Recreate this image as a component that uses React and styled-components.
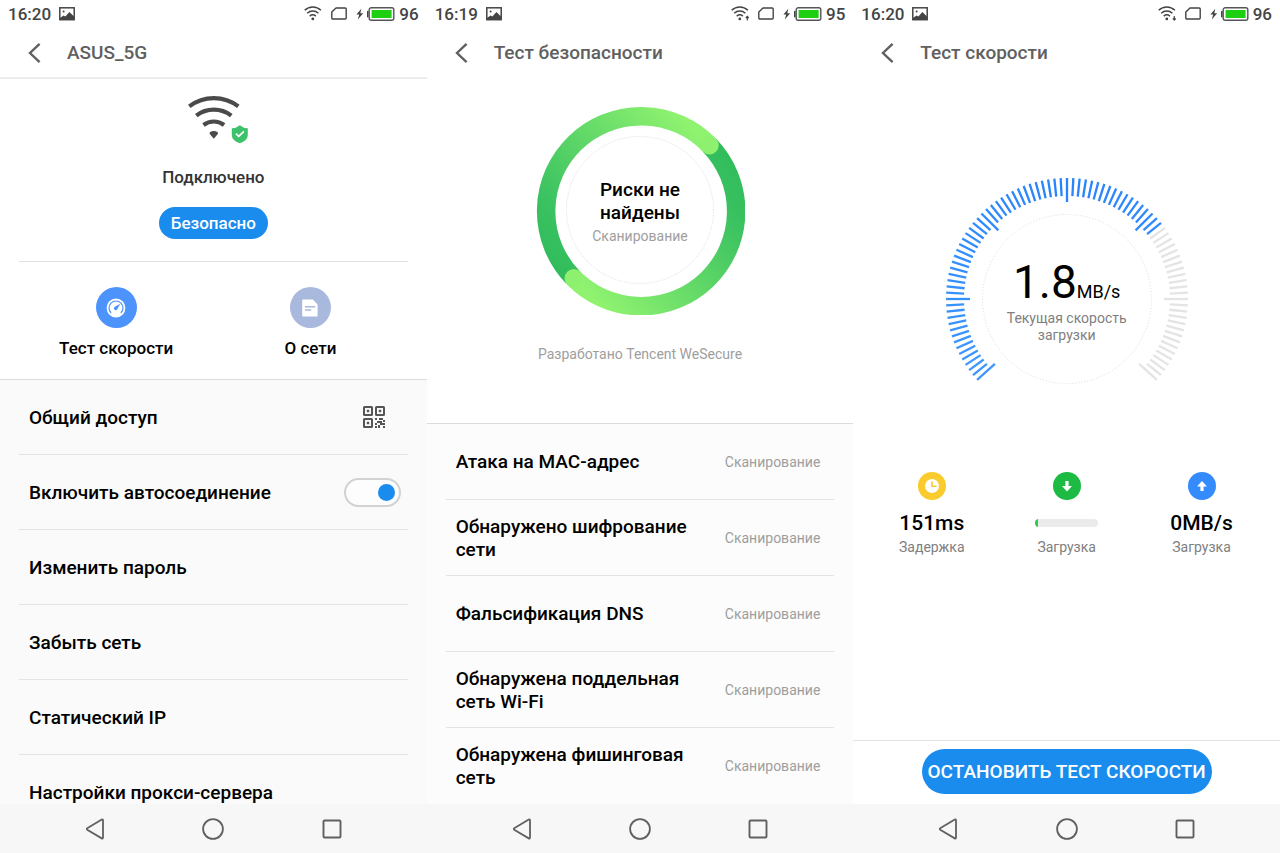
import React, { useState } from 'react';
import styled, { createGlobalStyle } from 'styled-components';

const GlobalStyle = createGlobalStyle`
    * { box-sizing: border-box; }
    body {
        margin: 0;
        background: #fff;
        color: #000;
        font-family: Roboto, "Noto Sans", sans-serif;
    }
    button {
        font-family: inherit;
        border: none;
        background: none;
        padding: 0;
        cursor: pointer;
    }
    ul { list-style: none; margin: 0; padding: 0; }
    h1, p { margin: 0; }
    svg { display: block; }
`;

const Screens = styled.div`
    display: grid;
    grid-template-columns: repeat(3, minmax(0, 1fr));
    height: 100vh;
`;
const Phone = styled.section`
    display: flex;
    flex-direction: column;
    min-height: 0;
    background: #fff;
`;

/* status bar */
const StatusBar = styled.div`
    display: flex;
    flex: none;
    justify-content: space-between;
    align-items: center;
    height: 28px;
    padding: 0 8px;
    color: #444;
    font-size: 17px;
    font-weight: 500;
    line-height: 26px;
`;
const StatusGroup = styled.div`
    display: flex;
    align-items: center;
    gap: ${props => props.$gap}px;
    height: 27px;
    align-self: flex-start;
`;
const Power = styled.span`
    display: flex;
    align-items: center;
    gap: 4px;
`;

/* title bar */
const TitleBar = styled.header`
    display: flex;
    flex: none;
    align-items: center;
    gap: 24px;
    height: 51px;
    padding: 0 26px;
    border-bottom: 2px solid ${props => props.$line ? '#ededed' : 'transparent'};
`;
const Title = styled.h1`
    color: #606060;
    font-size: 19px;
    font-weight: 500;
    line-height: 24px;
`;

/* nav bar */
const NavBar = styled.nav`
    display: grid;
    flex: none;
    grid-template-columns: repeat(3, 1fr);
    height: 49px;
    padding: 0 36px;
    background: #f7f7f7;
`;
const NavButton = styled.button`
    display: flex;
    align-items: center;
    justify-content: center;
`;

/* network screen */
const Hero = styled.div`
    display: flex;
    flex: none;
    flex-direction: column;
    align-items: center;
    margin: 0 19px;
    padding: 16px 0 22px;
    border-bottom: 1px solid #e0e0e0;
`;
const HeroState = styled.p`
    margin-top: 20px;
    color: #333;
    font-size: 17px;
    font-weight: 500;
    line-height: 24px;
`;
const SafeButton = styled.button`
    height: 32px;
    margin-top: 18px;
    padding: 0 12px;
    border-radius: 16px;
    background: #1a8cee;
    color: #fff;
    font-size: 17px;
    font-weight: 500;
`;
const Actions = styled.div`
    display: grid;
    flex: none;
    grid-template-columns: 1fr 1fr;
    padding: 25px 19px 21px;
`;
const Action = styled.button`
    display: flex;
    flex-direction: column;
    align-items: center;
    gap: 10px;
    color: #000;
    font-size: 17px;
    font-weight: 500;
    line-height: 20px;
`;
const ActionIcon = styled.span`
    display: flex;
    align-items: center;
    justify-content: center;
    width: 41px;
    height: 41px;
    border-radius: 50%;
    background: ${props => props.$color};
`;

/* lists */
const List = styled.ul`
    flex: 1;
    min-height: 0;
    overflow: hidden;
    padding: 0 19px;
    border-top: 1px solid #dcdcdc;
    background: ${props => props.$color};
`;
const Row = styled.li`
    display: flex;
    align-items: center;
    justify-content: space-between;
    height: ${props => props.$height}px;
    padding: 0 ${props => props.$right}px 0 10px;
    border-bottom: 1px solid #e4e4e4;
    &:last-child { border-bottom: none; }
`;
const RowButton = styled.button`
    color: #000;
    font-size: 19px;
    font-weight: 500;
    line-height: 23px;
    text-align: left;
`;
const RowLabel = styled.label`
    font-size: 19px;
    font-weight: 500;
    line-height: 23px;
`;
const RowText = styled.span`
    max-width: 240px;
    font-size: 19px;
    font-weight: 500;
    line-height: 23px;
`;
const RowState = styled.span`
    color: #9e9e9e;
    font-size: 14px;
    line-height: 20px;
`;
const Switch = styled.input`
    appearance: none;
    display: flex;
    align-items: center;
    justify-content: flex-start;
    width: 57px;
    height: 29px;
    margin: 0;
    padding: 0 4px;
    border: 2px solid #d2d2d2;
    border-radius: 15px;
    background: #fdfdfd;
    cursor: pointer;
    &::before {
        content: '';
        width: 17px;
        height: 17px;
        border-radius: 50%;
        background: #bbb;
    }
    &:checked { justify-content: flex-end; }
    &:checked::before { background: #1a8cee; }
`;

/* dials: the drawing and its text share one grid cell */
const Dial = styled.div`
    display: grid;
    flex: none;
    justify-items: center;
    align-items: center;
    padding-top: ${props => props.$top}px;
    > * { grid-area: 1 / 1; }
`;
const DialText = styled.div`
    display: flex;
    flex-direction: column;
    align-items: center;
    padding-top: 4px;
    text-align: center;
`;
const RiskText = styled.p`
    width: 100px;
    font-size: 19px;
    font-weight: 500;
    line-height: 23px;
`;
const RiskState = styled.p`
    margin-top: 2px;
    color: #9e9e9e;
    font-size: 14px;
    line-height: 20px;
`;
const Credit = styled.p`
    flex: none;
    padding: 29px 0 59px;
    color: #9e9e9e;
    font-size: 14px;
    line-height: 20px;
    text-align: center;
`;
const Speed = styled.p`
    font-size: 46px;
    line-height: 48px;
    small {
        font-size: 18px;
        line-height: 18px;
    }
`;
const SpeedNote = styled.p`
    width: 140px;
    margin-top: 4px;
    color: #808080;
    font-size: 14px;
    line-height: 17px;
`;

/* speed figures */
const Stats = styled.div`
    display: grid;
    grid-template-columns: repeat(3, 1fr);
    padding: 51px 11px 0;
`;
const Stat = styled.div`
    display: flex;
    flex-direction: column;
    align-items: center;
`;
const StatValue = styled.div`
    display: flex;
    align-items: center;
    height: 24px;
    margin: 11px 0 2px;
    font-size: 21px;
    font-weight: 500;
    line-height: 24px;
`;
const StatName = styled.span`
    color: #808080;
    font-size: 14px;
    line-height: 20px;
`;
const Track = styled.div`
    width: 63px;
    height: 8px;
    border-radius: 4px;
    background: #ebebeb;
    overflow: hidden;
`;
const Fill = styled.div`
    height: 100%;
    background: #2ecc4f;
`;
const Footer = styled.footer`
    display: flex;
    justify-content: center;
    margin-top: auto;
    padding: 8px 0 10px;
    border-top: 1px solid #e2e2e2;
`;
const StopButton = styled.button`
    height: 45px;
    padding: 0 6px;
    border-radius: 23px;
    background: #1a8cee;
    color: #fff;
    font-size: 19px;
    font-weight: 500;
`;

const SIGNAL_ARROWS = {
    up: 'M16.3 14.5V10.6M14.8 12l1.5-1.6 1.5 1.6',
    down: 'M16.3 10v4M14.8 12.4l1.5 1.6 1.5-1.6',
};

const PictureIcon = () => (
    <svg width="16" height="14" viewBox="0 0 16 14">
        <rect x="0.8" y="0.8" width="14.4" height="11.9" fill="none" stroke="#444" strokeWidth="1.5" />
        <path d="M1 12.6V11l3.6-2.6 1.8 1.2L10.4 5l4.6 4.6v3z" fill="#444" />
        <circle cx="4.6" cy="4.4" r="1" fill="#444" />
    </svg>
);

const SignalIcon = ({ arrow }) => (
    <svg width="18" height="15" viewBox="0 0 18 15" fill="none" stroke="#444" strokeWidth="1.5">
        <path d="M0.7 4.2a11.6 11.6 0 0 1 16.2 0" />
        <path d="M3.2 7.3a8.2 8.2 0 0 1 11.2 0" />
        <path d="M5.7 10.1a4.9 4.9 0 0 1 6.2 0" />
        <circle cx="8.8" cy="12.9" r="1.4" fill="#444" stroke="none" />
        {arrow && <path d={SIGNAL_ARROWS[arrow]} strokeWidth="1.2" />}
    </svg>
);

const SimIcon = () => (
    <svg width="16" height="13" viewBox="0 0 16 13">
        <path d="M5 1h9.2a1 1 0 0 1 1 1v9a1 1 0 0 1-1 1H1.8a1 1 0 0 1-1-1V5z" fill="none" stroke="#444" strokeWidth="1.4" strokeLinejoin="round" />
    </svg>
);

const BatteryIcon = () => (
    <svg width="39" height="14" viewBox="0 0 39 14">
        <path d="M5.3 1.8L0.4 7.6h2.8l-1.4 4.9L7.2 6.3H4.3z" fill="#444" />
        <path d="M11.8 4.6v5.2" stroke="#444" strokeWidth="1.6" strokeLinecap="round" />
        <rect x="13.2" y="0.8" width="24.6" height="12.4" rx="2" fill="none" stroke="#555" strokeWidth="1.4" />
        <rect x="15.6" y="3" width="20" height="8" fill="#1fcf12" />
    </svg>
);

const BackIcon = () => (
    <svg width="17" height="22" viewBox="0 0 17 22">
        <path d="M13.6 1.8L4 11l9.6 9.2" fill="none" stroke="#606060" strokeWidth="2.4" />
    </svg>
);

const WifiSafeIcon = () => (
    <svg width="76" height="50" viewBox="0 0 76 50">
        <g fill="none" stroke="#4a4a4a" strokeWidth="4.2">
            <path d="M14.3 11.3a40.5 40.5 0 0 1 49 0" />
            <path d="M21.3 20.6a28.6 28.6 0 0 1 35 0" />
            <path d="M28.5 30a17 17 0 0 1 20.6 0" />
        </g>
        <path d="M34.9 37.2q3.9-2.4 7.8 0q.8 1-.1 2.1l-3.8 4.4-3.8-4.4q-.9-1.1-.1-2.1z" fill="#4a4a4a" />
        <path d="M64.8 30.3q3.6 3 8 3V40q0 5.4-8 8.3-8-2.9-8-8.3v-6.7q4.4 0 8-3z" fill="#3cc26a" />
        <path d="M60.9 38.6l2.8 2.8 5.2-5" fill="none" stroke="#fff" strokeWidth="1.6" />
    </svg>
);

const GaugeIcon = () => (
    <svg width="20" height="20" viewBox="0 0 20 20">
        <circle cx="10" cy="10" r="9.4" fill="#fff" />
        <path d="M5.1 15a7 7 0 1 1 9.8 0" fill="none" stroke="#4c93fb" strokeWidth="1.2" />
        <path d="M14.4 5.8l-3 5.3a1.8 1.8 0 1 1-2.5-2.3z" fill="#4c93fb" />
    </svg>
);

const DocIcon = () => (
    <svg width="18" height="18" viewBox="0 0 18 18">
        <path d="M1.2 1.6a1 1 0 0 1 1-1h9.6l4.8 4.8v11a1 1 0 0 1-1 1H2.2a1 1 0 0 1-1-1z" fill="#fff" />
        <path d="M4 7.7h10.2M4 11h6.2" stroke="#a9b8dd" strokeWidth="1.6" />
    </svg>
);

const QrIcon = () => (
    <svg width="22" height="22" viewBox="0 0 22 22" fill="#555">
        {[[0, 0], [12, 0], [0, 12]].map(([x, y]) => (
            <g key={`${x}-${y}`}>
                <rect x={x + 1} y={y + 1} width="8" height="8" rx="0.5" fill="none" stroke="#555" strokeWidth="2" />
                <rect x={x + 3.8} y={y + 3.8} width="2.4" height="2.4" />
            </g>
        ))}
        <path d="M12 12h2v2h-2zM16 12h4v2h-4zM20 14h2v2h-2zM14 15h5v2h-5zM12 17h2v2h-2zM17 17h5v2h-5zM12 20h2v2h-2zM15 19h2v3h-2zM20 20h2v2h-2z" />
    </svg>
);

const ClockIcon = () => (
    <svg width="28" height="28" viewBox="0 0 28 28">
        <circle cx="14" cy="14" r="14" fill="#f9cb2c" />
        <circle cx="14" cy="14" r="7" fill="#fff" />
        <path d="M14 9.5v4.8h4.5" fill="none" stroke="#f9cb2c" strokeWidth="1.6" />
    </svg>
);

const ArrowIcon = ({ color, up }) => (
    <svg width="28" height="28" viewBox="0 0 28 28">
        <circle cx="14" cy="14" r="14" fill={color} />
        <path
            d={up ? 'M14 9l5 5.5h-3.4v4.5h-3.2v-4.5H9z' : 'M14 19.5l5-5.5h-3.4V9h-3.2v5H9z'}
            fill="#fff"
        />
    </svg>
);

const ScanRing = () => (
    <svg width="210" height="210" viewBox="-105 -105 210 210">
        <defs>
            <linearGradient id="ringUp" gradientUnits="userSpaceOnUse" x1="-78" y1="66" x2="68" y2="-66">
                <stop offset="0" stopColor="#31bc5b" />
                <stop offset="0.2" stopColor="#3bc261" />
                <stop offset="1" stopColor="#90f370" />
            </linearGradient>
            <linearGradient id="ringDown" gradientUnits="userSpaceOnUse" x1="78" y1="-66" x2="-68" y2="66">
                <stop offset="0" stopColor="#31bc5b" />
                <stop offset="0.2" stopColor="#3bc261" />
                <stop offset="1" stopColor="#90f370" />
            </linearGradient>
        </defs>
        <g fill="none" strokeWidth="18.5">
            <path d="M-67.2 67.2A95 95 0 0 1 69.5 -64.8" stroke="url(#ringUp)" />
            <path d="M69.5 -64.8A95 95 0 0 1 -67.2 67.2" stroke="url(#ringDown)" />
        </g>
        <circle cx="69.5" cy="-64.8" r="9.25" fill="#8df06e" />
        <circle cx="-66.2" cy="68.2" r="9.25" fill="#8df06e" />
        <circle r="73.5" fill="none" stroke="#dcdcdc" strokeDasharray="1 1.5" />
    </svg>
);

// one tick every 3 degrees, a long one every 45 and at both ends
const TICKS = Array.from({ length: 89 }, (_, i) => i * 3 - 132);

const SpeedDial = () => (
    <svg width="244" height="244" viewBox="-122 -122 244 244">
        {TICKS.map(angle => {
            const long = angle % 45 === 0 || Math.abs(angle) === 132;
            const tone = Math.round(Math.abs(angle) / 6);
            return (
                <line
                    key={angle}
                    y1="-121"
                    y2={long ? -97 : -103}
                    stroke={angle <= 51 ? `rgb(${40 + tone}, ${130 + tone}, 252)` : '#e4e4e4'}
                    strokeWidth="2.3"
                    transform={`rotate(${angle})`}
                />
            );
        })}
        <circle r="84.5" fill="none" stroke="#dcdcdc" strokeDasharray="1 2" />
    </svg>
);

const StatusRow = ({ time, charge, arrow }) => (
    <StatusBar>
        <StatusGroup $gap={8}>
            <span>{time}</span>
            <PictureIcon />
        </StatusGroup>
        <StatusGroup $gap={9}>
            <SignalIcon arrow={arrow} />
            <SimIcon />
            <Power>
                <BatteryIcon />
                <span>{charge}</span>
            </Power>
        </StatusGroup>
    </StatusBar>
);

const Navigation = () => (
    <NavBar>
        <NavButton aria-label="Назад">
            <svg width="22" height="22" viewBox="0 0 22 22">
                <path d="M19 2.3v17.4a.8.8 0 0 1-1.2.7L3.2 11.7a.8.8 0 0 1 0-1.4L17.8 1.6a.8.8 0 0 1 1.2.7z" fill="none" stroke="#606060" strokeWidth="1.8" />
            </svg>
        </NavButton>
        <NavButton aria-label="Домой">
            <svg width="22" height="22" viewBox="0 0 22 22">
                <circle cx="11" cy="11" r="9.9" fill="none" stroke="#606060" strokeWidth="1.8" />
            </svg>
        </NavButton>
        <NavButton aria-label="Недавние">
            <svg width="22" height="22" viewBox="0 0 22 22">
                <rect x="2.5" y="2.5" width="17" height="17" rx="1" fill="none" stroke="#606060" strokeWidth="1.9" />
            </svg>
        </NavButton>
    </NavBar>
);

const Screen = ({ title, line, time, charge, arrow, children }) => (
    <Phone>
        <StatusRow time={time} charge={charge} arrow={arrow} />
        <TitleBar $line={line}>
            <button aria-label="Назад"><BackIcon /></button>
            <Title>{title}</Title>
        </TitleBar>
        {children}
        <Navigation />
    </Phone>
);

const NetworkScreen = () => {
    const [auto, setAuto] = useState(true);

    return (
        <Screen title="ASUS_5G" line time="16:20" charge="96">
            <Hero>
                <WifiSafeIcon />
                <HeroState>Подключено</HeroState>
                <SafeButton>Безопасно</SafeButton>
            </Hero>
            <Actions>
                <Action>
                    <ActionIcon $color="#4c93fb"><GaugeIcon /></ActionIcon>
                    Тест скорости
                </Action>
                <Action>
                    <ActionIcon $color="#a9b8dd"><DocIcon /></ActionIcon>
                    О сети
                </Action>
            </Actions>
            <List $color="#fafafa">
                <Row $height={75} $right={23}>
                    <RowButton>Общий доступ</RowButton>
                    <button aria-label="QR-код"><QrIcon /></button>
                </Row>
                <Row $height={75} $right={7}>
                    <RowLabel htmlFor="auto">Включить автосоединение</RowLabel>
                    <Switch id="auto" type="checkbox" checked={auto} onChange={() => setAuto(!auto)} />
                </Row>
                <Row $height={75} $right={10}><RowButton>Изменить пароль</RowButton></Row>
                <Row $height={75} $right={10}><RowButton>Забыть сеть</RowButton></Row>
                <Row $height={75} $right={10}><RowButton>Статический IP</RowButton></Row>
                <Row $height={75} $right={10}><RowButton>Настройки прокси-сервера</RowButton></Row>
            </List>
        </Screen>
    );
};

const checks = [
    'Атака на MAC-адрес',
    'Обнаружено шифрование сети',
    'Фальсификация DNS',
    'Обнаружена поддельная сеть Wi-Fi',
    'Обнаружена фишинговая сеть',
];

const SecurityScreen = () => (
    <Screen title="Тест безопасности" time="16:19" charge="95" arrow="up">
        <Dial $top={26}>
            <ScanRing />
            <DialText>
                <RiskText>Риски не найдены</RiskText>
                <RiskState>Сканирование</RiskState>
            </DialText>
        </Dial>
        <Credit>Разработано Tencent WeSecure</Credit>
        <List $color="#fcfcfc">
            {checks.map(name => (
                <Row key={name} $height={76} $right={14}>
                    <RowText>{name}</RowText>
                    <RowState>Сканирование</RowState>
                </Row>
            ))}
        </List>
    </Screen>
);

const SpeedScreen = () => {
    const progress = 5;

    return (
        <Screen title="Тест скорости" time="16:20" charge="96" arrow="down">
            <Dial $top={98}>
                <SpeedDial />
                <DialText>
                    <Speed>1.8<small>MB/s</small></Speed>
                    <SpeedNote>Текущая скорость загрузки</SpeedNote>
                </DialText>
            </Dial>
            <Stats>
                <Stat>
                    <ClockIcon />
                    <StatValue>151ms</StatValue>
                    <StatName>Задержка</StatName>
                </Stat>
                <Stat>
                    <ArrowIcon color="#1dbb43" />
                    <StatValue>
                        <Track role="progressbar" aria-label="Загрузка" aria-valuenow={progress}>
                            <Fill style={{ width: `${progress}%` }} />
                        </Track>
                    </StatValue>
                    <StatName>Загрузка</StatName>
                </Stat>
                <Stat>
                    <ArrowIcon color="#338bfd" up />
                    <StatValue>0MB/s</StatValue>
                    <StatName>Загрузка</StatName>
                </Stat>
            </Stats>
            <Footer>
                <StopButton>ОСТАНОВИТЬ ТЕСТ СКОРОСТИ</StopButton>
            </Footer>
        </Screen>
    );
};

const App = () => {
    return (
        <>
            <GlobalStyle />
            <Screens>
                <NetworkScreen />
                <SecurityScreen />
                <SpeedScreen />
            </Screens>
        </>
    );
};

export default App;
